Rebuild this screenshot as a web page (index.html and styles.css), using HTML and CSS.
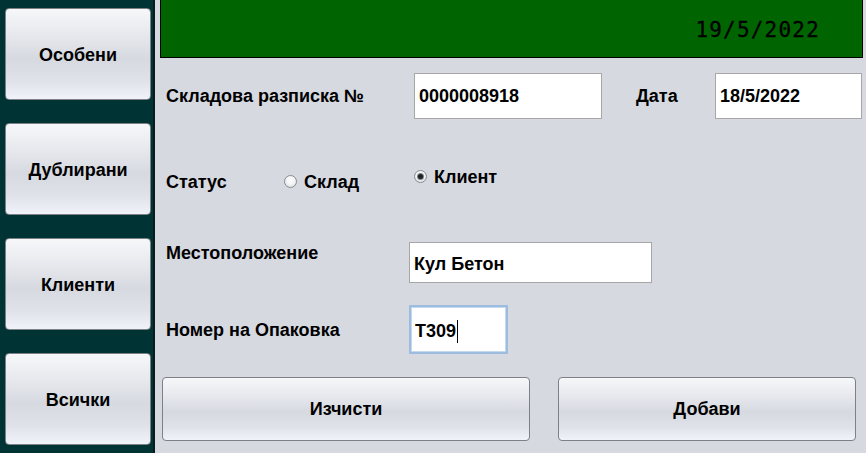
FILE: index.html
```html
<!DOCTYPE html>
<html lang="bg">
<head>
<meta charset="utf-8">
<title>Складова разписка</title>
<link rel="stylesheet" href="styles.css">
</head>
<body>
<div class="app">
  <nav class="sidebar">
    <button class="btn side-btn">Особени</button>
    <button class="btn side-btn">Дублирани</button>
    <button class="btn side-btn">Клиенти</button>
    <button class="btn side-btn">Всички</button>
  </nav>
  <main class="main">
    <header class="banner"><span class="banner-date">19/5/2022</span></header>

    <div class="row row-receipt">
      <span class="label label-receipt">Складова разписка №</span>
      <div class="field field-receipt">0000008918</div>
      <span class="label label-date">Дата</span>
      <div class="field field-date">18/5/2022</div>
    </div>

    <div class="row row-status">
      <span class="label label-status">Статус</span>
      <span class="radio-opt opt-store"><span class="radio"></span><span class="label">Склад</span></span>
      <span class="radio-opt opt-client"><span class="radio checked"></span><span class="label">Клиент</span></span>
    </div>

    <div class="row row-location">
      <span class="label label-location">Местоположение</span>
      <div class="field field-location">Кул Бетон</div>
    </div>

    <div class="row row-package">
      <span class="label label-package">Номер на Опаковка</span>
      <div class="field field-package focused">Т309<span class="caret"></span></div>
    </div>

    <div class="row row-actions">
      <button class="btn action-btn btn-clear">Изчисти</button>
      <button class="btn action-btn btn-add">Добави</button>
    </div>
  </main>
</div>
</body>
</html>
```

FILE: styles.css
```css
* { box-sizing: border-box; }

html, body {
  margin: 0;
  padding: 0;
  width: 866px;
  height: 453px;
  overflow: hidden;
}

body {
  font-family: "Liberation Sans", Arial, sans-serif;
  font-weight: bold;
  font-size: 18px;
  color: #000;
}

.app {
  display: flex;
  width: 866px;
  height: 453px;
}

.sidebar {
  width: 155px;
  flex: none;
  background: #003333;
  border-right: 2px solid #0c1c1c;
  display: flex;
  flex-direction: column;
  gap: 23px;
  padding: 8px 0 0 5px;
}

.btn {
  font-family: "Liberation Sans", Arial, sans-serif;
  font-weight: bold;
  font-size: 18px;
  color: #000;
  border: 1px solid #7d8085;
  border-radius: 4px;
  background: linear-gradient(to bottom, #f6f7f9 0%, #e6e8ed 30%, #d6d9e0 55%, #dfe2e9 80%, #f1f3fa 100%);
  padding: 0;
  margin: 0;
}

.side-btn {
  width: 146px;
  height: 92px;
  padding-top: 2px;
}

.main {
  flex: 1;
  background: #d6d9e0;
  display: flex;
  flex-direction: column;
  padding: 0 3px 0 5px;
}

.banner {
  height: 58px;
  width: 703px;
  background: #006400;
  border: 1px solid #000;
  border-top: none;
  text-align: right;
  padding: 18px 42px 0 0;
}

.banner-date {
  font-family: "DejaVu Sans Mono", monospace;
  font-weight: normal;
  font-size: 21px;
  letter-spacing: 1.2px;
  line-height: 24px;
  color: #000;
  -webkit-text-stroke: 0.3px #000;
}

.row {
  display: flex;
  padding-left: 6px;
}

.label {
  line-height: 21px;
  white-space: nowrap;
}

.field {
  background: #fff;
  border: 1px solid #a6a6a6;
  padding-left: 4px;
  display: flex;
  align-items: center;
  white-space: nowrap;
}

/* row 1 */
.row-receipt {
  margin-top: 15px;
  height: 46px;
  align-items: center;
}
.label-receipt { width: 248px; }
.field-receipt { width: 188px; height: 46px; }
.label-date { width: 79px; margin-left: 34px; }
.field-date { width: 147px; height: 46px; }

/* row 2 */
.row-status {
  margin-top: 47px;
  height: 30px;
  align-items: flex-start;
}
.label-status { width: 118px; margin-top: 6px; }
.radio-opt {
  display: flex;
  align-items: center;
  gap: 7px;
}
.opt-store { width: 130px; margin-top: 6px; }
.opt-client { margin-top: 1px; }

.radio {
  width: 13px;
  height: 13px;
  border-radius: 50%;
  border: 1px solid #8a8c90;
  background: radial-gradient(circle at 50% 40%, #ffffff 0%, #f3f4f6 45%, #d5d7dc 100%);
  position: relative;
  top: -1px;
}
.radio.checked::after {
  content: "";
  position: absolute;
  left: 3px;
  top: 3px;
  width: 5px;
  height: 5px;
  border-radius: 50%;
  background: #222;
  box-shadow: 0 0 0 1px #7b8089;
}

/* row 3 */
.row-location {
  margin-top: 46px;
  height: 41px;
  align-items: flex-start;
}
.label-location { width: 243px; margin-top: 1px; }
.field-location { width: 243px; height: 41px; padding-top: 3px; }

/* row 4 */
.row-package {
  margin-top: 22px;
  height: 49px;
  align-items: center;
}
.label-package { width: 243px; margin-top: 2px; }
.field-package { width: 99px; height: 49px; padding-left: 4px; padding-top: 3px; }
.field-package.focused {
  border: 2px solid #9dbde0;
  box-shadow: inset 0 0 0 1px #c4d8ee;
}
.caret {
  display: inline-block;
  width: 1px;
  height: 23px;
  background: #000;
  margin-left: 1px;
}

/* buttons */
.row-actions {
  margin-top: 23px;
  padding-left: 2px;
  gap: 28px;
}
.action-btn { height: 64px; }
.btn-clear { width: 368px; }
.btn-add { width: 298px; }
```
